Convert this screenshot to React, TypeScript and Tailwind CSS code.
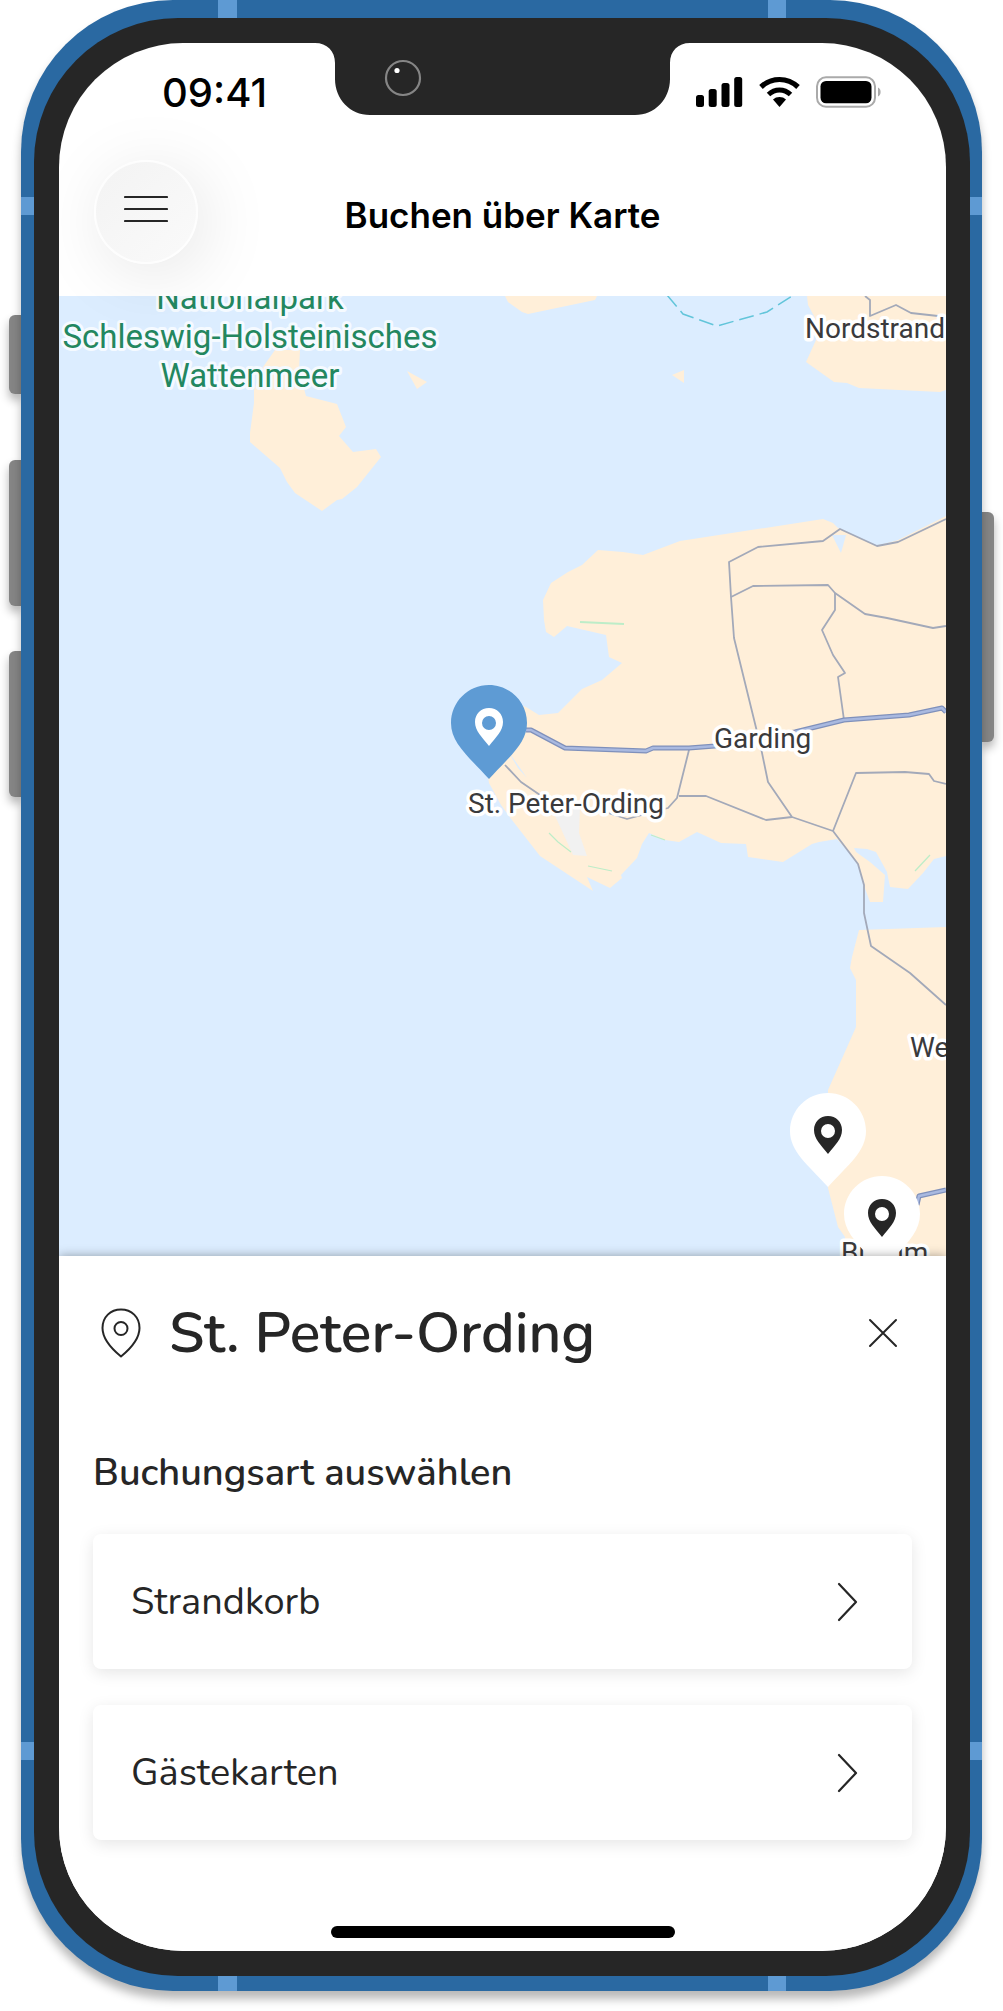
import React from 'react';
import clsx from 'clsx';

const PIN_SHAPE = 'M38 0C17 0 0 17 0 38C0 58 17 71 38 94C59 71 76 58 76 38C76 17 59 0 38 0Z';
const PIN_GLYPH =
  'M38 23C30 23 24 29 24 37C24 46 31 52 38 61C45 52 52 46 52 37C52 29 46 23 38 23ZM38 31A7 7 0 1 1 38 45A7 7 0 1 1 38 31Z';

const land = [
  // Island below the national park label
  'M275 350H300L299 370L306 396L337 404L346 427L339 436L353 452L376 449L381 457L357 487L342 499L337 500L322 511L295 493L287 482L280 468L250 442V433L254 403V390L263 367Z',
  'M407 371L427 382L417 389Z',
  'M505 296L508 302L522 312L528 314L595 300L597 296Z',
  'M672 375L684 370V383Z',
  // Nordstrand
  'M807 296L808 305L815 318L816 340L806 362L834 382L847 383L859 388L940 392L946 390V296Z',
  // Eiderstedt
  'M543 600L551 583L568 572L582 565L598 550L623 552L643 555L680 541L823 519L833 523L838 528L877 546L898 540L922 528L946 516V856L934 859L923 873L908 889L890 887L887 872L876 852L867 849L854 848L856 852L870 862L885 875L883 902H870L863 883L858 865L847 850L837 839L819 842L812 844L783 862L748 857L746 844L721 843L697 832L679 842L665 840L649 833L642 844L637 858L621 875L622 878L610 888L587 877L593 891L540 856L512 820L501 805L489 783L488 777L500 740L520 705L526 707L539 715L558 713L582 689L602 680L622 663L609 657L606 635L567 626L554 637L546 632L544 620Z',
  // Dithmarschen
  'M859 930L946 927V1256H845V1237L838 1227L828 1188V1090L856 1027V980L850 968L852 957Z',
];

const roads = [
  'M865 296L870 300V316L896 305L911 313L938 316',
  'M946 519L898 542L877 546L840 529L823 541L758 547L729 562L731 597L734 638L761 748L768 782L792 817L833 831L858 864L864 885L864 913L871 946L910 973L946 1005',
  'M731 597L753 586L828 585L835 593L865 614L887 618L933 628L946 626',
  'M835 593V610L822 630L833 655L845 673L838 677L844 720',
  'M605 812L627 819L668 808L677 798L689 750',
  'M679 796H706L766 820L792 817',
  'M505 765L521 782L540 795',
  'M833 831L856 773L905 772L929 774L934 781L946 784',
];

const highways = [
  'M526 730H531L565 748L646 751L653 748H689L715 746L795 732L844 720L909 715L942 708L946 712',
  'M917 1205L919 1196L946 1190',
];

const places = [
  { name: 'Nordstrand', x: 805, y: 338 },
  { name: 'Garding', x: 714, y: 748 },
  { name: 'St. Peter-Ording', x: 468, y: 813 },
  { name: 'Wesselburen', x: 910, y: 1057 },
  { name: 'Büsum', x: 841, y: 1262 },
];

const pins = [
  { x: 451, y: 685, active: true },
  { x: 790, y: 1093, active: false },
  { x: 844, y: 1176, active: false },
];

const bookingTypes = ['Strandkorb', 'Gästekarten'];

const Notch = () => (
  <svg width="375" height="72" viewBox="0 0 375 72" aria-hidden="true">
    <path d="M0 0C12 0 20 8 20 20V36C20 56 35 72 55 72H320C340 72 355 56 355 36V20C355 8 363 0 375 0Z" fill="#262626" />
    <circle cx="88" cy="35" r="17" fill="none" stroke="#858585" strokeWidth="2.200" />
    <circle cx="82" cy="27.500" r="2.600" fill="#fff" />
  </svg>
);

const StatusIcons = () => (
  <div className="flex items-start gap-4 pt-[33px] pl-1.5">
    <svg width="47" height="32" viewBox="0 0 47 32" aria-hidden="true">
      <rect x="0" y="19" width="8" height="12" rx="2.500" />
      <rect x="12.700" y="13" width="8" height="18" rx="2.500" />
      <rect x="25.500" y="7" width="8" height="24" rx="2.500" />
      <rect x="38.200" y="1" width="8" height="30" rx="2.500" />
    </svg>
    <svg width="41" height="32" viewBox="0 0 41 32" aria-hidden="true">
      <path d="M20.500 31L14 23.500C17.500 20.200 23.500 20.200 27 23.500Z" />
      <path d="M9.500 18.500C15.800 12.500 25.200 12.500 31.500 18.500" fill="none" stroke="#000" strokeWidth="5" />
      <path d="M2 11C12.500 1 28.500 1 39 11" fill="none" stroke="#000" strokeWidth="5.200" />
    </svg>
    <svg width="66" height="32" viewBox="0 0 66 32" aria-hidden="true">
      <rect x="1" y="1.300" width="58" height="29.500" rx="9" fill="none" stroke="#aaa" strokeWidth="2" />
      <rect x="4.500" y="5" width="51" height="22.300" rx="5.500" />
      <path d="M62 11.500C65.500 13 65.500 19 62 20.500Z" fill="#aaa" />
    </svg>
  </div>
);

const CoastMap = () => (
  <svg
    viewBox="59 296 887 960"
    preserveAspectRatio="xMidYMid slice"
    className="block h-[960px] w-full bg-[#dcedff] font-[Roboto,sans-serif]"
    role="img"
    aria-label="Karte"
  >
    {land.map((d) => (
      <path key={d} d={d} fill="#ffefd9" />
    ))}
    <path d="M832 535L846 535L841 553Z" fill="#dcedff" />
    <path d="M551 807H580L579 833L587 856L573 855Z" fill="#f1f1f1" />
    <path d="M509 753L513 758L527 778L518 768Z" fill="#dcedff" />
    <g stroke="#bdedc8" strokeWidth="1.200" fill="none">
      <path d="M580 622L624 624" strokeWidth="2" />
      <path d="M549 833L558 842L571 852" />
      <path d="M588 866L612 871" />
      <path d="M651 835L665 840" />
      <path d="M930 855L915 871" />
    </g>
    <path
      d="M667 295L683 314L717 326L767 312L792 296"
      fill="none"
      stroke="#62c5da"
      strokeWidth="1.500"
      strokeDasharray="15 6"
    />
    {roads.map((d) => (
      <path key={d} d={d} fill="none" stroke="#a3a9b9" strokeWidth="1.800" strokeLinejoin="round" />
    ))}
    {highways.map((d) => (
      <g key={d} fill="none" strokeLinejoin="round">
        <path d={d} stroke="#7f90bb" strokeWidth="5" />
        <path d={d} stroke="#a9b9e0" strokeWidth="2.500" />
      </g>
    ))}
    <g fontSize="33" fill="#23875f" stroke="#f5faff" strokeWidth="6" strokeLinejoin="round" textAnchor="middle" paintOrder="stroke">
      <text x="250" y="309">Nationalpark</text>
      <text x="250" y="348">Schleswig-Holsteinisches</text>
      <text x="250" y="387">Wattenmeer</text>
    </g>
    <g fontSize="28" fill="#3a3a3c" stroke="#fff" strokeWidth="7" strokeLinejoin="round" paintOrder="stroke">
      {places.map((place) => (
        <text key={place.name} x={place.x} y={place.y}>
          {place.name}
        </text>
      ))}
    </g>
    {pins.map((pin) => (
      <g key={pin.y} transform={`translate(${pin.x} ${pin.y})`}>
        <path d={PIN_SHAPE} fill={pin.active ? '#5e9bd4' : '#fff'} />
        <path d={PIN_GLYPH} fill={pin.active ? '#fff' : '#262626'} fillRule="evenodd" />
      </g>
    ))}
  </svg>
);

// Hardware buttons on the sides of the phone
const sideButtons = [
  'left-[9px] top-[315px] h-[79px] rounded-l-md',
  'left-[9px] top-[460px] h-[146px] rounded-l-md',
  'left-[9px] top-[651px] h-[146px] rounded-l-md',
  'right-[9px] top-[512px] h-[230px] rounded-r-md',
];

const antennaBands = [
  'top-0 left-[197px] h-[18px] w-[19px]',
  'top-0 right-[196px] h-[18px] w-[18px]',
  'bottom-0 left-[197px] h-[15px] w-[19px]',
  'bottom-0 right-[196px] h-[15px] w-[18px]',
  'left-0 top-[197px] h-[18px] w-[13px]',
  'right-0 top-[197px] h-[18px] w-3',
  'left-0 bottom-[231px] h-[18px] w-[13px]',
  'right-0 bottom-[231px] h-[18px] w-3',
];

export default function App() {
  return (
    <div className="relative bg-white px-[21px] pb-5 text-[#262626]">
      {sideButtons.map((position) => (
        <div key={position} className={clsx('absolute w-3 bg-[#858585] shadow-[0_6px_10px_rgba(0,0,0,0.3)]', position)} />
      ))}

      <div className="relative rounded-[152px] bg-[#2a69a2] pt-[18px] pr-3 pb-[15px] pl-[13px] shadow-[0_8px_10px_rgba(0,0,0,0.28)]">
        {antennaBands.map((position) => (
          <div key={position} className={clsx('absolute bg-[#5e9ad3]', position)} />
        ))}

        <div className="relative rounded-[144px] bg-[#262626] py-[25px] pr-6 pl-[25px]">
          <div className="overflow-hidden rounded-[124px] bg-white">
            {/* Status bar */}
            <div className="grid grid-cols-[1fr_auto_1fr] items-start">
              <span className="pt-[30px] pr-12 text-right font-[Inter,sans-serif] text-[40px] leading-10 font-medium text-black">
                09:41
              </span>
              <Notch />
              <StatusIcons />
            </div>

            <header className="relative z-10 grid grid-cols-[1fr_auto_1fr] items-center px-[35px] pt-[45px] pb-8">
              <button
                type="button"
                aria-label="Menü"
                className="flex size-[104px] items-center justify-center rounded-full border-2 border-white/80 bg-linear-to-br from-[#f3f3f3] to-[#fafafa] shadow-[8px_10px_70px_rgba(0,0,0,0.1)]"
              >
                <svg width="44" height="28" viewBox="0 0 44 28" className="-mt-1.5" aria-hidden="true">
                  <path d="M1 2H43M1 14H43M1 26H43" stroke="#262626" strokeWidth="2.200" strokeLinecap="round" />
                </svg>
              </button>
              <h1 className="pt-1.5 font-[Inter,sans-serif] text-[35px] leading-10 font-semibold text-black">
                Buchen über Karte
              </h1>
            </header>

            <CoastMap />

            {/* Location sheet */}
            <section className="relative z-10 bg-white px-[34px] pt-[41px] pb-[13px] font-[Nunito,'Open_Sans',sans-serif] shadow-[0_0_10px_rgba(0,0,0,0.35)]">
              <div className="flex items-center">
                <svg width="40" height="50" viewBox="0 0 40 50" className="ml-2 shrink-0" fill="none" stroke="#262626" strokeWidth="2" aria-hidden="true">
                  <path d="M20 48.500C9 39.500 1.500 30 1.500 20C1.500 9 9.500 1.500 20 1.500C30.500 1.500 38.500 9 38.500 20C38.500 30 31 39.500 20 48.500Z" strokeLinejoin="round" />
                  <circle cx="20" cy="20.500" r="6.500" />
                </svg>
                <h2 className="ml-7 flex-1 text-[57px] leading-[72px] font-semibold">St. Peter-Ording</h2>
                <button type="button" aria-label="Schließen" className="mr-3.5">
                  <svg width="30" height="30" viewBox="0 0 30 30" aria-hidden="true">
                    <path d="M2 2L28 28M28 2L2 28" stroke="#262626" strokeWidth="2" strokeLinecap="round" />
                  </svg>
                </button>
              </div>

              <h3 className="mt-[80px] text-[38px] leading-[48px] font-semibold">Buchungsart auswählen</h3>

              <div className="mt-[37px] flex flex-col gap-[36px]">
                {bookingTypes.map((type) => (
                  <button
                    key={type}
                    type="button"
                    className="flex h-[135px] items-center justify-between rounded-lg bg-white pr-[54px] pl-[38px] text-left text-[38px] shadow-[0_4px_16px_rgba(0,0,0,0.1)]"
                  >
                    {type}
                    <svg width="21" height="40" viewBox="0 0 21 40" aria-hidden="true">
                      <path d="M2 2L19 20L2 38" fill="none" stroke="#262626" strokeWidth="2.200" strokeLinecap="round" strokeLinejoin="round" />
                    </svg>
                  </button>
                ))}
              </div>

              <div className="mx-auto mt-[86px] h-3 w-[344px] rounded-full bg-black" />
            </section>
          </div>
        </div>
      </div>
    </div>
  );
}
